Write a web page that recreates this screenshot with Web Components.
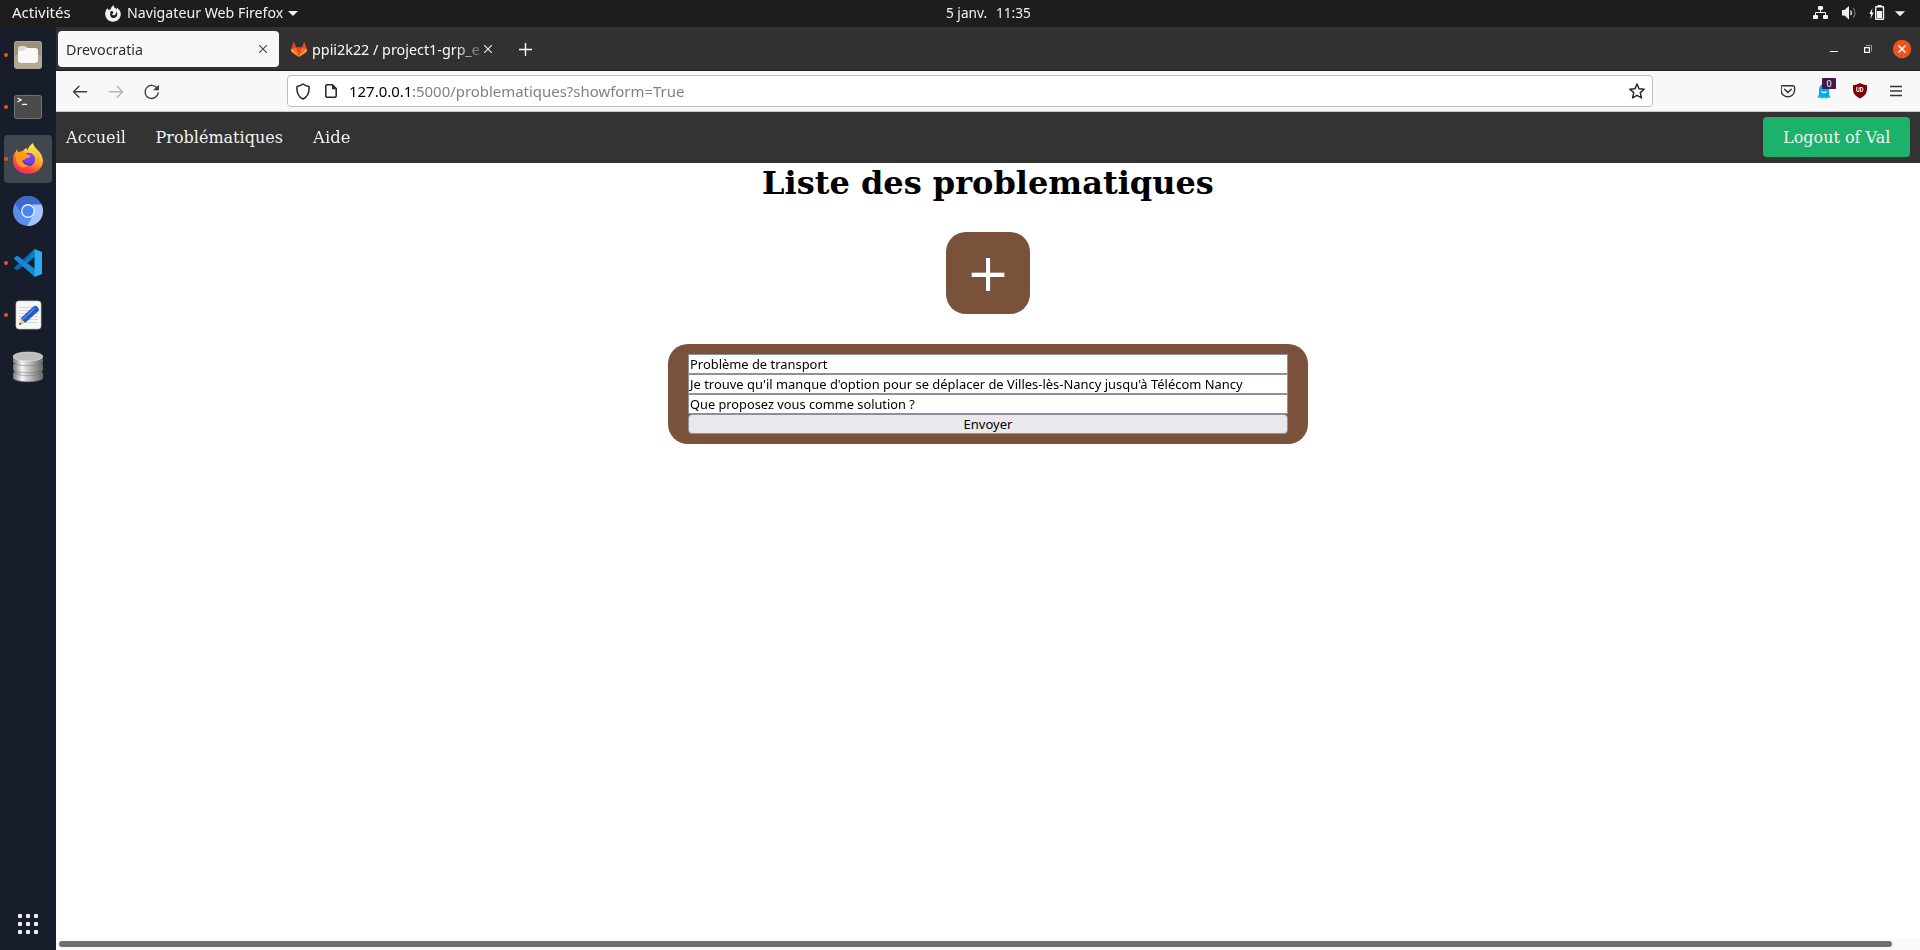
<!DOCTYPE html>
<html lang="fr">
<head>
<meta charset="utf-8">
<title>Drevocratia</title>
<style>
html,body{margin:0;height:100%;overflow:hidden;background:#fff}
body{font-family:"Noto Sans","Open Sans",sans-serif}
</style>
</head>
<body>
<ubuntu-desktop>
  <top-panel slot="panel"></top-panel>
  <app-dock slot="dock"></app-dock>
  <browser-window slot="window">
    <site-nav></site-nav>
    <problem-list>
      <form-field w="137" slot="fields">Problème de transport</form-field>
      <form-field w="552.5" slot="fields">Je trouve qu'il manque d'option pour se déplacer de Villes-lès-Nancy jusqu'à Télécom Nancy</form-field>
      <form-field w="224.5" slot="fields">Que proposez vous comme solution ?</form-field>
    </problem-list>
  </browser-window>
</ubuntu-desktop>
<script>
const define = (name, html, setup) => customElements.define(name, class extends HTMLElement {
  constructor() {
    super();
    const t = document.createElement('template');
    t.innerHTML = html;
    this.attachShadow({mode: 'open'}).append(t.content.cloneNode(true));
  }
  connectedCallback() { if (setup) setup(this); }
});

/* A single line of text condensed or stretched to the width in its "w" attribute */
define('fit-text', `<style>
:host{display:block;flex:none;white-space:nowrap}
span{display:inline-block;transform-origin:0 50%}
</style><span><slot></slot></span>`, el => {
  const s = el.shadowRoot.querySelector('span'), w = +el.getAttribute('w');
  el.style.width = w + 'px';
  const fit = () => { const n = s.offsetWidth; if (n) s.style.transform = 'scaleX(' + w / n + ')'; };
  fit();
  window.addEventListener('load', fit);
});

define('ubuntu-desktop', `<style>
:host{display:grid;grid-template:27px 923px / 56px 1864px;width:1920px;height:950px}
slot[name=panel]::slotted(*){grid-column:1/3}
</style><slot name="panel"></slot><slot name="dock"></slot><slot name="window"></slot>`);

define('top-panel', `<style>
:host{display:grid;grid-template-columns:946px 1fr auto;background:#1d1d1d;color:#f2f2f2;font-size:14px;line-height:26px;height:27px}
div{display:flex;align-items:center;height:27px}
svg{display:block;flex:none}
fit-text{height:27px}
</style>
<div><fit-text w="59" style="margin-left:12px">Activités</fit-text>
<svg style="margin:0 6px 0 34px" width="16" height="17" viewBox="0 0 16 17"><path fill="#f2f2f2" d="M2.6 3c.1 1 .4 1.500 1 2 .6-.5 1.500-.6 2.100-.6.200-2 1.600-3.400 3-4.400-.2 1.400.4 2.200 1.300 2.900 1 .3 1.500 1.200 1.700 1.900C12 3.800 11.800 3.200 11.500 2.600 14 4 15.800 6.200 15.800 9c0 4.300-3.500 7.700-7.800 7.700S.2 13.300.2 9c0-2.500.9-4.500 2.400-6zM7 6C5.400 5.800 4.800 7 5.500 8c-1.200 3 1 5.200 3.300 5 3.500-.3 4.400-4.200 2.500-6.800.2 1.800-.4 3-1.500 3.700-1.600.8-3 .1-3-1.100C8.500 9 9.200 7.500 7 6z"/></svg>
<fit-text w="156">Navigateur Web Firefox</fit-text>
<svg style="margin-left:5px" width="10" height="5"><path fill="#f2f2f2" d="M0 0h10L5 5z"/></svg></div>
<div><fit-text w="41">5 janv.</fit-text><fit-text w="35" style="margin-left:9px">11:35</fit-text></div>
<div><svg width="107" height="27" viewBox="1813 0 107 27" fill="#f2f2f2"><rect x="1818" y="6" width="5" height="4" rx="1"/><rect x="1813" y="15" width="5" height="4" rx="1"/><rect x="1823" y="15" width="5" height="4" rx="1"/><path fill="none" stroke="#f2f2f2" d="M1820.500 10v2.500M1815.500 15v-2.500h10V15"/>
<path d="M1842 10h2.500l4.500-4v13.500l-4.500-4H1842z"/><path fill="none" stroke="#f2f2f2" stroke-width="1.200" d="M1850.500 10.500q1.800 2.300 0 4.500"/><path fill="none" stroke="#777" stroke-width="1.200" d="M1853.200 8q3.600 5 0 9.500"/>
<path d="M1872.500 8l-3.200 6h1.800l-.6 5 3.200-6.500h-1.800z"/><rect x="1877.500" y="5" width="4" height="2"/><rect x="1875.700" y="6.700" width="7.800" height="12.600" rx=".6" fill="none" stroke="#f2f2f2" stroke-width="1.400"/><path d="M1877 11h5v7h-5z"/><path d="M1895 11.300h10l-5 5z"/></svg></div>`);

define('dock-item', `<style>
:host{display:flex;align-items:center;justify-content:center;box-sizing:border-box;width:48px;height:48px;border-radius:4px;position:relative}
:host([active]){background:#41474f}
:host([running])::before{content:"";position:absolute;left:0;top:22px;width:4px;height:4px;border-radius:50%;background:#e95420}
</style><slot></slot>`);

define('app-dock', `<style>
:host{display:flex;flex-direction:column;align-items:center;gap:4px;box-sizing:border-box;background:#171d2a;padding:4px 0 16px;height:923px}
svg{display:block;width:30px;height:32px}
.grid{margin-top:auto;display:grid;grid-template-columns:repeat(3,4px);gap:4px}
.grid i{height:4px;background:#eee;border-radius:1px}
</style>
<dock-item running><svg viewBox="0 0 30 32"><rect x="1" y="2" width="28" height="28" rx="3" fill="#aea68f"/><rect x="2" y="3" width="26" height="26" rx="2" fill="#99917c"/><path fill="#b1a993" d="M2 16h26v11a2 2 0 0 1-2 2H4a2 2 0 0 1-2-2z"/><path fill="#dedbd3" d="M5 10q0-3 3-3h4l3 2h7v8H5z"/><path fill="#f9f8f6" d="M5 12h4q2 0 3-2l1-1h9q3 0 3 3v9q0 3-3 3H8q-3 0-3-3z"/></svg></dock-item>
<dock-item running><svg viewBox="0 0 30 32"><rect x="1.500" y="4.500" width="27" height="23" rx="2" fill="#4b4b4b" stroke="#737373"/><path fill="none" stroke="#fff" stroke-width="1.300" d="M4.500 7l3.500 2-3.500 2M9 13.400h5"/></svg></dock-item>
<dock-item running active><svg viewBox="0 .7 30 32"><defs><linearGradient id="a" x1=".8" y1=".1" x2=".25" y2="1"><stop stop-color="#ffe83c"/><stop offset=".4" stop-color="#ff9c20"/><stop offset=".7" stop-color="#ff4a3c"/><stop offset="1" stop-color="#ee2073"/></linearGradient><linearGradient id="y" x2="0" y2="1"><stop stop-color="#fff151"/><stop offset="1" stop-color="#ff9322"/></linearGradient></defs><path fill="url(#a)" d="M4 7q.5 2 1.500 3 2-1 4-1 2-3 4.500-3 0 3 2 4l6-3q7 4 8 11c0 8-6 13.500-15 13.500S0 26 0 18q0-6 3-9z"/><path fill="url(#y)" d="M20 .7c-6 5-7 9.300-5 12.300q9-1 8 10 5-4 4-10l2 2c0-6-8-8.300-9-14.300z"/><circle cx="15.500" cy="17" r="6.600" fill="#7542e5"/><path fill="#4f36bb" d="M10 18c1 7 9 8 12 1-3 4-9 3-12-1z"/><path fill="#ff9a1f" d="M4 12q5-4 10 0 1 1 4 1-1 3-5 3-1 2-4 2 1 5 7 5-8 5-12-2-2-5 0-9z"/></svg></dock-item>
<dock-item><svg viewBox="0 0 30 32"><circle cx="15" cy="16" r="15" fill="#5b8dec"/><path fill="#3e69ca" d="M2 8.500A15 15 0 0 1 28 8.500L28.500 10H15a7 7 0 0 0-6 9z"/><path fill="#a5c4fb" d="M28.500 9.500A15 15 0 0 1 14 31l7-12q2-5-1.500-9.500z"/><circle cx="15" cy="16" r="7" fill="#e7f0ff"/><circle cx="15" cy="16" r="5.600" fill="#4685f3"/></svg></dock-item>
<dock-item running><svg viewBox="0 0 30 32"><path fill="#0a68b4" d="M1.200 20.500L21.500 2v8L4.500 23.500l-3.300-2z"/><path fill="#1788d6" d="M1.200 10.800L4.200 8.500 22 22v8L1.200 12z"/><path fill="#1788d6" d="M12 14.500L21.500 2v8L14.500 16z" opacity=".6"/><path fill="#2bacf0" d="M21.500 2L29 5v22l-7.500 3z"/></svg></dock-item>
<dock-item running><svg viewBox="0 0 30 32"><rect x="3" y="2" width="25" height="28" rx="3" fill="#f7f7f5" stroke="#c9c9c5" stroke-width=".7"/><path stroke="#d7d7d7" d="M6 8.500h19M6 11.500h19M6 14.500h19M6 17.500h19M6 20.500h19M6 23.500h19"/><path fill="#2459cb" d="M20.500 7.500q2-1.500 4 .5t1.500 3.500L12 24l-4.500-4.500z"/><path stroke="#5b8cec" stroke-width="1.500" d="M9.500 20.500L22 9"/><path fill="#ecc49c" d="M8 19.500l4 4.500-6 2z"/><path fill="#333" d="M6.800 23.500l1.700 1.700-2.500.8z"/></svg></dock-item>
<dock-item><svg viewBox="0 0 30 32"><defs><linearGradient id="g"><stop stop-color="#777"/><stop offset=".3" stop-color="#f3f3f3"/><stop offset=".65" stop-color="#aaa"/><stop offset="1" stop-color="#666"/></linearGradient></defs><g fill="url(#g)" stroke="#777" stroke-width=".5"><path d="M0 22v5c2 5 28 5 30 0v-5z"/><path d="M1 14v7c2 5 26 5 28 0v-7z"/><path d="M0 13v5c2 5 28 5 30 0v-5z"/><path d="M0 5v6c2 5 28 5 30 0V5z"/></g><ellipse cx="15" cy="5.500" rx="14.800" ry="4.500" fill="#bebebe" stroke="#e9e9e9" stroke-width=".6"/></svg></dock-item>
<div class="grid"><i></i><i></i><i></i><i></i><i></i><i></i><i></i><i></i><i></i></div>`);

define('browser-tabs', `<style>
:host{display:flex;align-items:center;box-sizing:border-box;height:44px;background:#333031;border-bottom:1px solid #1c1b1c;color:#fbfbfe;font-size:14px;line-height:38px;padding:4px 0 3px 2px}
svg{display:block;flex:none}
fit-text{height:36px}
.tab{display:flex;align-items:center;box-sizing:border-box;width:221px;height:36px;background:#f8f8f8;border-radius:4px;color:#2d2a33;padding:0 12px 0 8px;justify-content:space-between}
.fade{width:168px;margin-left:5px;margin-right:1px;overflow:hidden;-webkit-mask:linear-gradient(90deg,#000 143px,transparent 176px)}
.win{margin-left:auto}
</style>
<div class="tab"><fit-text w="77.500">Drevocratia</fit-text><svg width="8" height="8"><path stroke="#444" stroke-width="1.100" d="M0 0l8 8M8 0L0 8"/></svg></div>
<svg style="margin-left:12px" width="16" height="16" viewBox="0 0 16 16"><path fill="#fc6d26" d="M0 9l2.800-8L5 6.500h6L13.200 1 16 9l-1 2-7 5-7-5z"/><path fill="#e24329" d="M5 6.500h6L8 15zM0 9l2.800-8L5 6.500zM16 9l-2.800-8L11 6.500z"/><path fill="#fca326" d="M0 9l1-1.500L8 16 .7 11zM16 9l-1-1.500L8 16l7.300-5z"/></svg>
<div class="fade"><fit-text w="168">ppii2k22 / project1-grp_e</fit-text></div>
<svg style="margin-left:3px" width="8" height="8"><path stroke="#eee" stroke-width="1.100" d="M0 0l8 8M8 0L0 8"/></svg>
<svg style="margin-left:27px" width="13" height="13"><path stroke="#fff" stroke-width="1.400" d="M6.500 0v13M0 6.500h13"/></svg>
<svg class="win" width="90" height="36" viewBox="1830 31 90 36"><path fill="#fff" d="M1830 51h8v1h-8z"/><path fill="none" stroke="#999" d="M1866 45.500h5.500v6"/><path fill="none" stroke="#fff" stroke-width="1.200" d="M1864.600 47.600h4.800v4.800h-4.800z"/><circle cx="1902" cy="49" r="9.200" fill="#e95420"/><path stroke="#fff" stroke-width="1.500" d="M1898.500 45.500l7 7M1905.500 45.500l-7 7"/></svg>`);

define('browser-toolbar', `<style>
:host{display:flex;align-items:center;box-sizing:border-box;height:41px;background:#f8f8f8;border-bottom:1px solid #c9c9c9;line-height:32px;font-size:14px;color:#000}
svg{display:block;flex:none}
.url{display:flex;align-items:center;box-sizing:border-box;width:1366px;height:32px;border:1px solid #bfbfc1;border-radius:4px;background:#fff;padding:0 7px 0 8px}
.url fit-text{height:30px}
.star{margin-left:auto}
.icons{position:relative}
.badge{position:absolute;left:41px;top:7px;width:14px;height:11px;line-height:11px;font-size:9px;text-align:center;color:#fff;background:#45184d;border-radius:1px}
.ud{position:absolute;left:75px;top:15px;width:8px;height:8px;line-height:8px}
.ud fit-text{font:bold 6.500px/8px Roboto,sans-serif;color:#fff}
.gray{color:#818087}
</style>
<svg width="231" height="40" viewBox="56 71 231 40" fill="none" stroke-linecap="round" stroke-linejoin="round" stroke-width="1.350"><path stroke="#3d3c42" d="M86.500 91.700H73.500M79 86.200l-5.500 5.500 5.500 5.500"/><path stroke="#b5b5b7" d="M109.500 91.700H122.700M117.200 86.200l5.500 5.500-5.500 5.500"/><path stroke="#3d3c42" d="M157.200 88.300a6.600 6.600 0 1 0 1 4.500"/><path fill="#3d3c42" stroke="none" d="M159 84.800v5.500h-6z"/></svg>
<div class="url">
<svg width="14" height="17" viewBox="0 0 14 17"><path fill="none" stroke="#222" stroke-width="1.500" stroke-linejoin="round" d="M7 1Q4 3 1 3.500C.500 9 2 13.500 7 16c5-2.500 6.500-7 6-12.500Q10 3 7 1z"/></svg>
<svg style="margin-left:15px" width="12" height="14" viewBox="0 0 12 14"><path fill="none" stroke="#222" stroke-width="1.500" stroke-linejoin="round" d="M7.500.8H2.200Q.8.800.8 2v10q0 1.200 1.400 1.200h7.600q1.400 0 1.400-1.200V4.500z"/><path fill="#222" d="M7 1v4.200h4.200z"/></svg>
<fit-text w="63" style="margin-left:12px">127.0.0.1</fit-text><fit-text class="gray" w="272">:5000/problematiques?showform=True</fit-text>
<svg class="star" width="16" height="17" viewBox="0 0 16 17"><path fill="none" stroke="#222" stroke-width="1.400" stroke-linejoin="round" d="M8 1l2 4.800 5.200.4-4 3.400 1.300 5.400L8 12.300 3.500 15l1.300-5.400-4-3.400L6 5.800z"/></svg></div>
<div class="icons" style="margin-left:128px"><svg width="122" height="40" viewBox="1781 71 122 40"><path fill="none" stroke="#333" stroke-width="1.400" d="M1782.700 85.700h10.300q1.600 0 1.600 1.800v2.500c0 9-13.500 9-13.500 0v-2.500q0-1.800 1.600-1.800z"/><path fill="none" stroke="#333" stroke-width="1.500" stroke-linecap="round" stroke-linejoin="round" d="M1784.600 89.300l3.300 3.200 3.300-3.200"/><path fill="#00aef0" d="M1819 94v-4c0-8 10-8 10 0v4l1.200 4-2.400-.4-1.500.9-2.200-.9-2.200.9-1.600-.9-2.600.4z"/><path stroke="#fff" stroke-width="1.100" fill="none" d="M1821.500 91.500q2.500 2.600 5 0"/><path fill="#800000" d="M1860 83q3 2 7 2.200c.3 7-.5 10-7 13.300-6.500-3.300-7.300-6.300-7-13.300q4-.2 7-2.200z"/><path stroke="#333" stroke-width="1.300" d="M1890 86.500h12M1890 91h12M1890 95.500h12"/></svg><span class="badge">0</span><span class="ud"><fit-text w="8">UD</fit-text></span></div>`);

define('browser-window', `<style>
:host{display:flex;flex-direction:column;height:923px;background:#fff}
.page{flex:1;min-height:0}
.scroll{box-sizing:border-box;height:12px;background:#fafafa;padding:3px 28px 3px 3px}
.scroll i{display:block;height:6px;border-radius:3px;background:#6f6f6f}
</style><browser-tabs></browser-tabs><browser-toolbar></browser-toolbar><div class="page"><slot></slot></div><div class="scroll"><i></i></div>`);

define('site-nav', `<style>
:host{display:flex;align-items:flex-start;box-sizing:border-box;height:51px;background:#333;color:#f2f2f2;font:16px/52px "DejaVu Serif",serif;padding:0 10px;gap:30px}
.out{margin:5px 0 0 auto;box-sizing:border-box;height:40px;line-height:42px;width:147px;padding-left:20px;background:#1cb26b;border-radius:4px}
</style><fit-text w="59.500">Accueil</fit-text><fit-text w="127">Problématiques</fit-text><fit-text w="37">Aide</fit-text><div class="out"><fit-text w="107">Logout of Val</fit-text></div>`);

define('form-field', `<style>
:host{display:block;box-sizing:border-box;height:20px;border:1px solid #8f8f9d;background:#fff;padding-left:1px;font-size:13px;line-height:18px;color:#000}
</style><fit-text><slot></slot></fit-text>`, el => {
  const f = el.shadowRoot.querySelector('fit-text'), w = el.getAttribute('w');
  f.setAttribute('w', w);
  f.connectedCallback();
});

define('problem-list', `<style>
:host{display:flex;flex-direction:column;align-items:center;font-family:"DejaVu Serif",serif}
h1{margin:0;font-size:32px;line-height:40px;height:69px;color:#000}
.add{width:84px;height:82px;border-radius:20px;background:#7a523b;color:#fff;font-size:52px;line-height:83px;text-align:center}
form{box-sizing:border-box;width:640px;height:100px;margin:30px 0 0;border-radius:20px;background:#7a523b;padding:10px 20px;font-family:"Noto Sans",sans-serif}
button{display:flex;justify-content:center;box-sizing:border-box;width:600px;height:20px;padding:0;border:1px solid #8f8f9d;border-radius:4px;background:#e9e9ed;font:13px/18px "Noto Sans",sans-serif;color:#000}
</style><h1><fit-text w="452">Liste des problematiques</fit-text></h1><div class="add">+</div>
<form><slot name="fields"></slot><button type="button"><fit-text w="49">Envoyer</fit-text></button></form>`);
</script>
</body>
</html>
